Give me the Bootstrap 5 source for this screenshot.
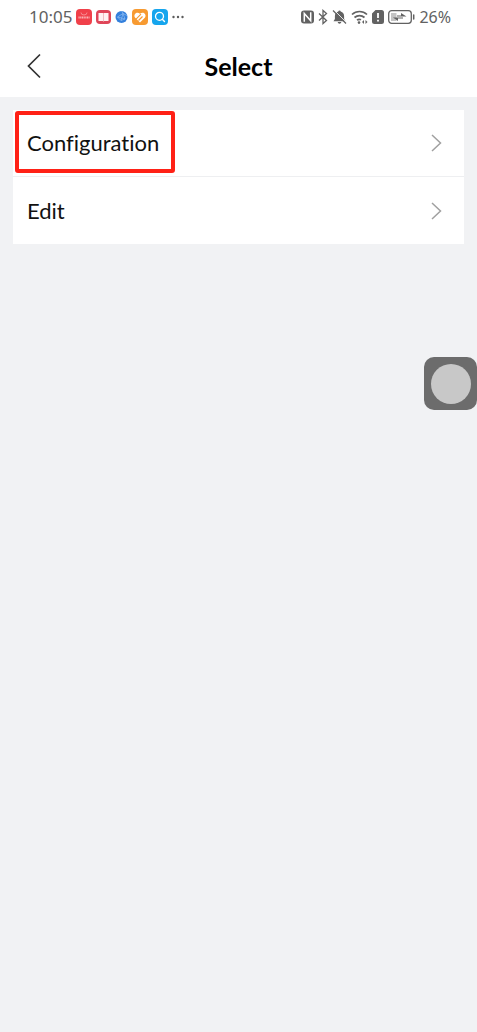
<!DOCTYPE html>
<html lang="en">
<head>
<meta charset="utf-8">
<meta name="viewport" content="width=device-width, initial-scale=1">
<title>Select</title>
<link href="https://cdn.jsdelivr.net/npm/bootstrap@5.3.0/dist/css/bootstrap.min.css" rel="stylesheet">
<style>
  body { background: #f1f2f4; color: #111; font-family: Lato, "Noto Sans", sans-serif; font-variant-ligatures: none; }
  .status-bar { height: 34px; padding: 0 26px 0 29px; color: #626262; font-family: "Noto Sans", sans-serif; font-size: 17px; line-height: 34px; }
  .status-bar svg { display: block; flex: none; }
  .battery-level { font-size: 16px; }
  .title-bar { height: 63px; padding: 0 16px; }
  .title-bar h1 { font-size: 25px; line-height: 32px; font-weight: 700; color: #000; }
  .back-btn { width: 36px; height: 40px; border: 0; background: none; }
  .option-list { margin: 13px; --bs-list-group-border-color: #eeeff1; --bs-list-group-border-radius: 0; }
  .option-list .list-group-item { height: 67px; padding: 0 20px 0 14px; font-size: 22px; line-height: 32px; color: #111; border-width: 0 0 1px; }
  .option-list .list-group-item:last-child { border-bottom: 0; }
  .highlight-frame { position: absolute; inset: 1px auto 3px 2px; width: 160px; border: 4px solid #ff2116; border-radius: 3px; pointer-events: none; }
  .assist-btn { top: 357px; right: 0; width: 53px; height: 53px; border: 0; border-radius: 10px; background: #6c6c6c; }
  .assist-btn span { width: 40px; height: 40px; background: #c8c8c8; }
</style>
</head>
<body>
<header class="bg-white">
  <div class="status-bar d-flex align-items-center justify-content-between">
    <div class="d-flex align-items-center gap-1">
      <span>10:05</span>
      <svg width="16" height="16" viewBox="0 0 16 16" aria-hidden="true"><rect width="16" height="16" rx="4" fill="#f0404a"/><path d="M5 3.500a3 2.500 0 0 0 6 0" fill="none" stroke="#f78b90"/><path d="M2.500 8.500h11" stroke="#fbb4b6" stroke-width="2" stroke-dasharray="1.200 .5"/></svg>
      <svg width="15" height="16" viewBox="0 0 15 16" aria-hidden="true"><rect y="1" width="15" height="14" rx="4" fill="#df4558"/><path d="M2.500 4h4.300l.7.600.7-.6h4.300v8H8.200l-.7.600-.7-.6H2.500z" fill="#fff1f1"/><path d="M7.500 4.500v7.500" stroke="#eeb0b6" stroke-width=".8"/></svg>
      <svg width="13" height="16" viewBox="0 0 13 16" aria-hidden="true"><circle cx="6.500" cy="8" r="6" fill="#3480dc"/><path d="M2.500 8 8 4.500l2 5.500-4 1.500zM8 4.500 6 11.500M2.500 8l7.500 2M6.500 2 8 4.500l4 2" fill="none" stroke="#8fbdf2" stroke-width=".7"/></svg>
      <svg width="16" height="16" viewBox="0 0 16 16" aria-hidden="true"><rect width="16" height="16" rx="4" fill="#f79a31"/><path d="M8 13.500 3.200 8.700C.8 5.800 4.600 1.800 8 4.800c3.400-3 7.200 1 4.800 3.900z" fill="#fff"/><path d="m4 10.200 5-5M6.500 11.500l4-4" stroke="#f79a31" stroke-width="1.200"/></svg>
      <svg width="16" height="16" viewBox="0 0 16 16" aria-hidden="true"><rect width="16" height="16" rx="4" fill="#16a5ed"/><circle cx="7.500" cy="7.300" r="4" fill="none" stroke="#fff" stroke-width="1.300"/><path d="m10.300 10.300 2.200 2.200" stroke="#fff" stroke-width="1.400" stroke-linecap="round"/></svg>
      <svg width="13" height="16" viewBox="0 0 13 16" aria-label="More notifications" fill="#5c5c5c"><circle cx="1.500" cy="8" r="1.200"/><circle cx="6" cy="8" r="1.200"/><circle cx="10.500" cy="8" r="1.200"/></svg>
    </div>
    <div class="d-flex align-items-center gap-1">
      <svg width="13" height="16" viewBox="0 0 13 16" aria-label="NFC"><rect y="1.500" width="13" height="13" rx="3" fill="#626262"/><path d="M3.300 12.800V4.500l6.400 7.300V3.200" fill="none" stroke="#fff" stroke-width="1.500"/></svg>
      <svg width="10" height="16" viewBox="0 0 10 16" aria-label="Bluetooth"><path d="m1 4.500 7.500 7-3.500 3v-13l3.500 3-7.500 7" fill="none" stroke="#626262" stroke-width="1.300"/></svg>
      <svg width="15" height="16" viewBox="0 0 15 16" aria-label="Muted"><path d="M7.500 1.500c.7 0 1.100.4 1.200 1 2.300.6 3.400 2.300 3.400 4.500v3l1.400 2.300H1.500L2.900 10V7c0-2.200 1.100-3.900 3.400-4.500.1-.6.500-1 1.200-1zM5.700 13h3.600c-.2 1.100-.9 1.700-1.800 1.700S5.900 14.100 5.700 13z" fill="#626262"/><path d="m2.500 1.500 12 12" stroke="#fff" stroke-width=".9"/><path d="m1 1.500 13 13" stroke="#626262" stroke-width="1.300"/></svg>
      <svg width="17" height="16" viewBox="0 0 17 16" aria-label="Wi-Fi"><path d="M1 5.500c4.300-4 10.700-4 15 0M3.500 8.500c2.900-2.600 7.100-2.600 10 0M6 11.200c1.300-1.100 2.700-1.200 4-.4" fill="none" stroke="#626262" stroke-width="1.700"/><circle cx="8" cy="13.600" r="1.300" fill="#626262"/><path d="m13 11-2 2 2 2zM14.500 11l2 2-2 2z" fill="#626262"/></svg>
      <svg width="12" height="16" viewBox="0 0 12 16" aria-label="SIM alert"><path d="M3.500 1h6A2.500 2.500 0 0 1 12 3.500v9A2.500 2.500 0 0 1 9.500 15h-7A2.500 2.500 0 0 1 0 12.500v-8z" fill="#626262"/><path d="M6 4v5M6 10.700v1.800" stroke="#fff" stroke-width="1.800"/></svg>
      <svg width="27" height="16" viewBox="0 0 27 16" aria-label="Charging"><rect x=".7" y="1.700" width="22.600" height="12.600" rx="3" fill="none" stroke="#626262" stroke-width="1.300"/><path d="M25.700 6v4" stroke="#626262" stroke-width="1.500" stroke-linecap="round"/><path d="M3 4h5.500v8H3z" fill="#c4c4c4"/><path d="M9 6.500h4V4l5.500 3.500H9zM15 9.500h-5V12L5 8.500h10z" fill="#626262"/></svg>
      <span class="battery-level">26%</span>
    </div>
  </div>
  <div class="title-bar position-relative d-flex align-items-center justify-content-center">
    <button class="back-btn position-absolute start-0 ms-3 p-0 d-flex align-items-center justify-content-center" type="button" aria-label="Back">
      <svg width="16" height="26" viewBox="0 0 16 26" fill="none" stroke="#333" stroke-width="1.700"><path d="M14 1.500 2.500 13 14 24.500"/></svg>
    </button>
    <h1 class="m-0">Select</h1>
  </div>
</header>
<main>
  <div class="list-group option-list">
    <a href="#configuration" class="list-group-item list-group-item-action d-flex align-items-center justify-content-between">
      <span>Configuration</span>
      <svg width="14" height="20" viewBox="0 0 14 20" fill="none" stroke="#a0a0a0" stroke-width="1.500" aria-hidden="true"><path d="m2 2 8.500 8L2 18"/></svg>
      <span class="highlight-frame"></span>
    </a>
    <a href="#edit" class="list-group-item list-group-item-action d-flex align-items-center justify-content-between">
      <span>Edit</span>
      <svg width="14" height="20" viewBox="0 0 14 20" fill="none" stroke="#a0a0a0" stroke-width="1.500" aria-hidden="true"><path d="m2 2 8.500 8L2 18"/></svg>
    </a>
  </div>
</main>
<button class="assist-btn position-fixed p-0 d-flex align-items-center justify-content-center" type="button" aria-label="Assistive touch"><span class="rounded-circle"></span></button>
<script src="https://cdn.jsdelivr.net/npm/bootstrap@5.3.0/dist/js/bootstrap.bundle.min.js"></script>
</body>
</html>
